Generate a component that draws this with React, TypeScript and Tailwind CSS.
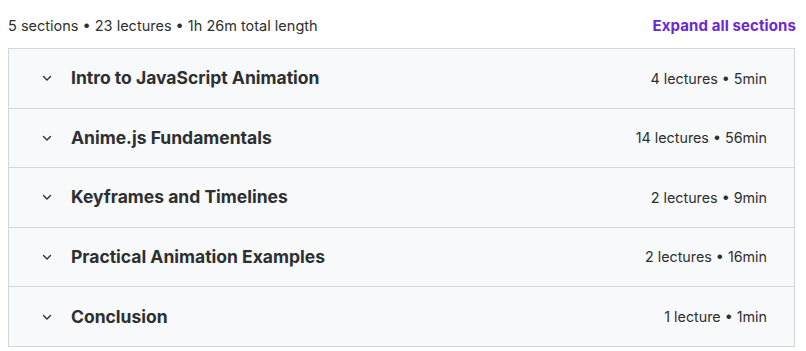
import React from 'react';

const SECTIONS = [
  { title: 'Intro to JavaScript Animation', meta: '4 lectures • 5min' },
  { title: 'Anime.js Fundamentals', meta: '14 lectures • 56min' },
  { title: 'Keyframes and Timelines', meta: '2 lectures • 9min' },
  { title: 'Practical Animation Examples', meta: '2 lectures • 16min' },
  { title: 'Conclusion', meta: '1 lecture • 1min' },
];

const Chevron = () => (
  <svg width="12" height="12" viewBox="0 0 12 12" fill="none" className="text-[#2d2f31]">
    <path d="M2.5 4.5 L6 8 L9.5 4.5" stroke="currentColor" strokeWidth="1.4" strokeLinecap="round" strokeLinejoin="round" />
  </svg>
);

export default function App() {
  return (
    <div className="w-[806px] h-[351px] bg-white font-['Inter',sans-serif] text-[#2d2f31] pl-[8px] pr-[11px]">
      <div className="flex items-center justify-between h-[48px] pt-[4px]">
        <span className="text-[14.5px] text-[#2d2f31]">5 sections • 23 lectures • 1h 26m total length</span>
        <button className="text-[15px] font-bold text-[#6d28d2] mr-[-1px] tracking-[0.1px]">Expand all sections</button>
      </div>
      <div className="border border-[#d1d7dc]">
        {SECTIONS.map((s, i) => (
          <div
            key={i}
            className={`flex items-center justify-between bg-[#f7f9fa] pl-[32px] pr-[27px] ${i > 0 ? 'border-t border-[#d1d7dc] h-[59.6px]' : 'h-[58.6px]'}`}
          >
            <div className="flex items-center gap-[18px]">
              <Chevron />
              <span className="text-[17.5px] font-bold text-[#2d2f31]">{s.title}</span>
            </div>
            <span className="text-[14.3px] text-[#2d2f31]">{s.meta}</span>
          </div>
        ))}
      </div>
    </div>
  );
}
